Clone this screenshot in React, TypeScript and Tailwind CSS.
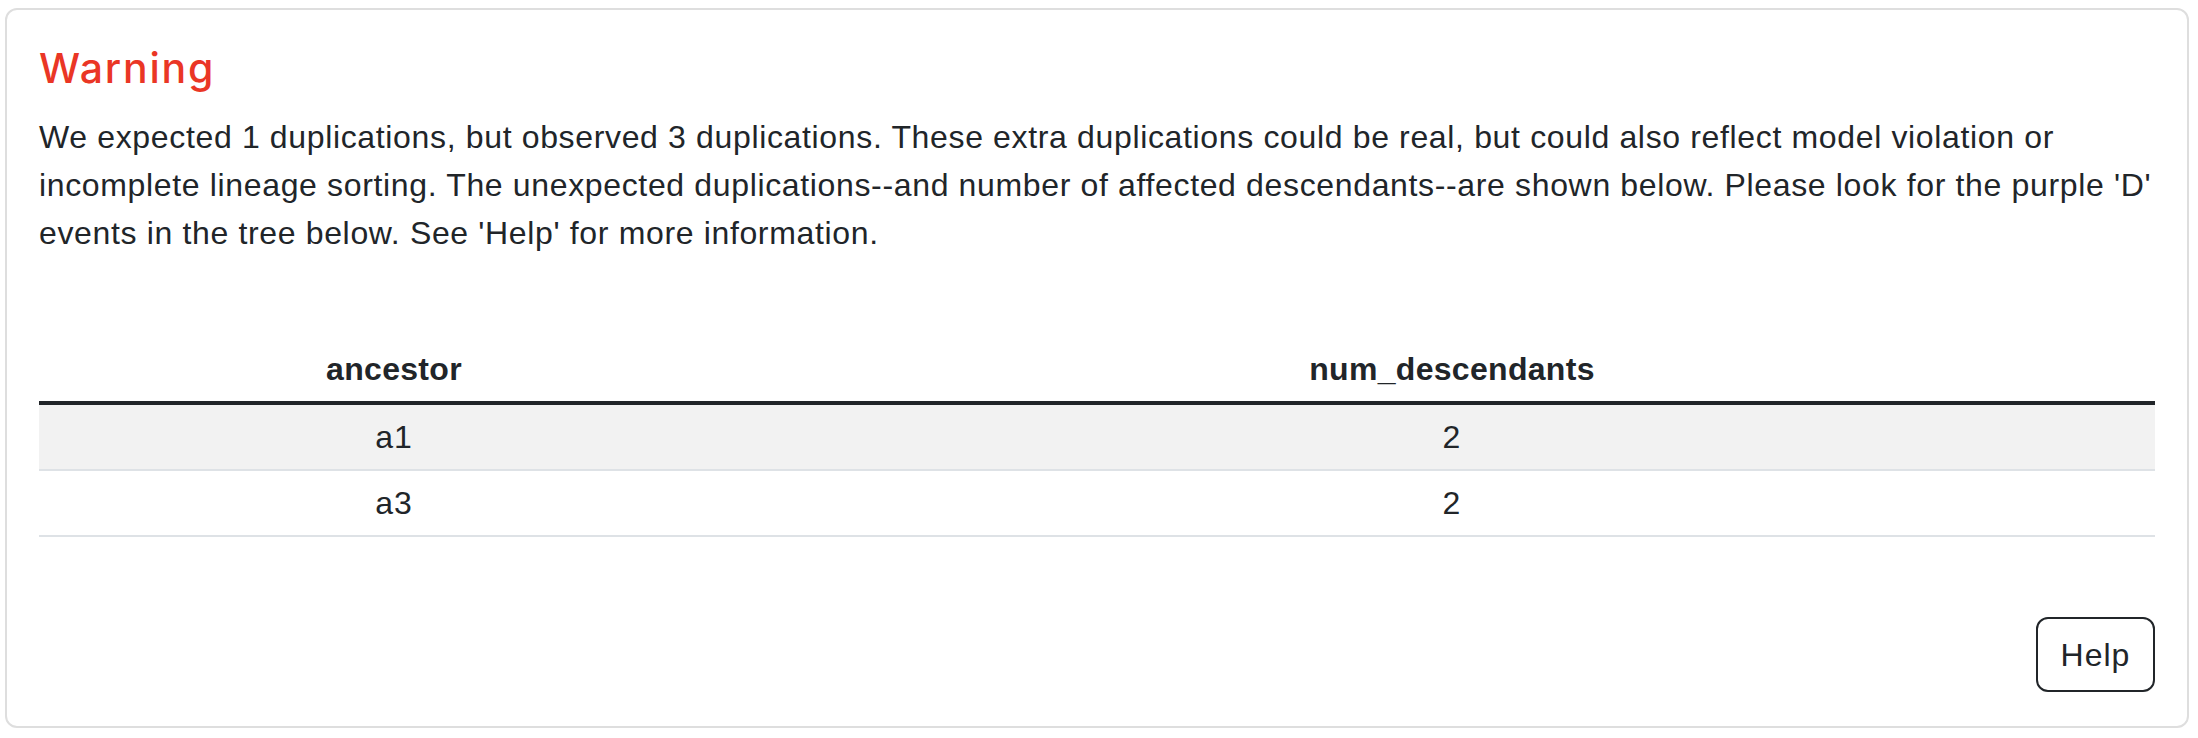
const rows = [
  { ancestor: 'a1', num: 2 },
  { ancestor: 'a3', num: 2 },
];

const App = () => {
  return (
    <div className="pt-[8px] pl-[5px] pr-[9px] bg-white font-['Liberation_Sans',Arial,sans-serif] text-[#212529]">
      <div className="border-2 border-[#dedede] rounded-[12px] px-[32px] pt-[33px] pb-[34px]">
        <h4 className="font-['Inter',sans-serif] font-medium text-[41px] leading-[50px] tracking-[1.8px] text-[#ea3625]">
          Warning
        </h4>
        <p className="mt-[20px] text-[32px] leading-[48px] tracking-[0.65px]">
          We expected 1 duplications, but observed 3 duplications. These extra duplications could be real, but could
          also reflect model violation or incomplete lineage sorting. The unexpected duplications--and number of
          affected descendants--are shown below. Please look for the purple 'D' events in the tree below. See 'Help'
          for more information.
        </p>
        <table className="mt-[80px] w-full border-collapse text-[32px] leading-[48px]">
          <thead>
            <tr className="border-b-4 border-[#212529]">
              <th className="w-[710px] py-[8px] text-center font-bold tracking-[0.3px]">ancestor</th>
              <th className="py-[8px] text-center font-bold tracking-[0.3px]">num_descendants</th>
            </tr>
          </thead>
          <tbody>
            {rows.map((r, i) => (
              <tr key={r.ancestor} className={`border-b-2 border-[#dee2e6] ${i === 0 ? 'bg-[#f2f2f2]' : ''}`}>
                <td className="py-[8px] text-center tracking-[1px]">{r.ancestor}</td>
                <td className="py-[8px] text-center tracking-[1px]">{r.num}</td>
              </tr>
            ))}
          </tbody>
        </table>
        <div className="mt-[80px] flex justify-end">
          <button className="w-[119px] h-[75px] border-2 border-[#212529] rounded-[12px] text-[32px] leading-[48px] tracking-[1px]">
            Help
          </button>
        </div>
      </div>
    </div>
  );
};

export default App;
